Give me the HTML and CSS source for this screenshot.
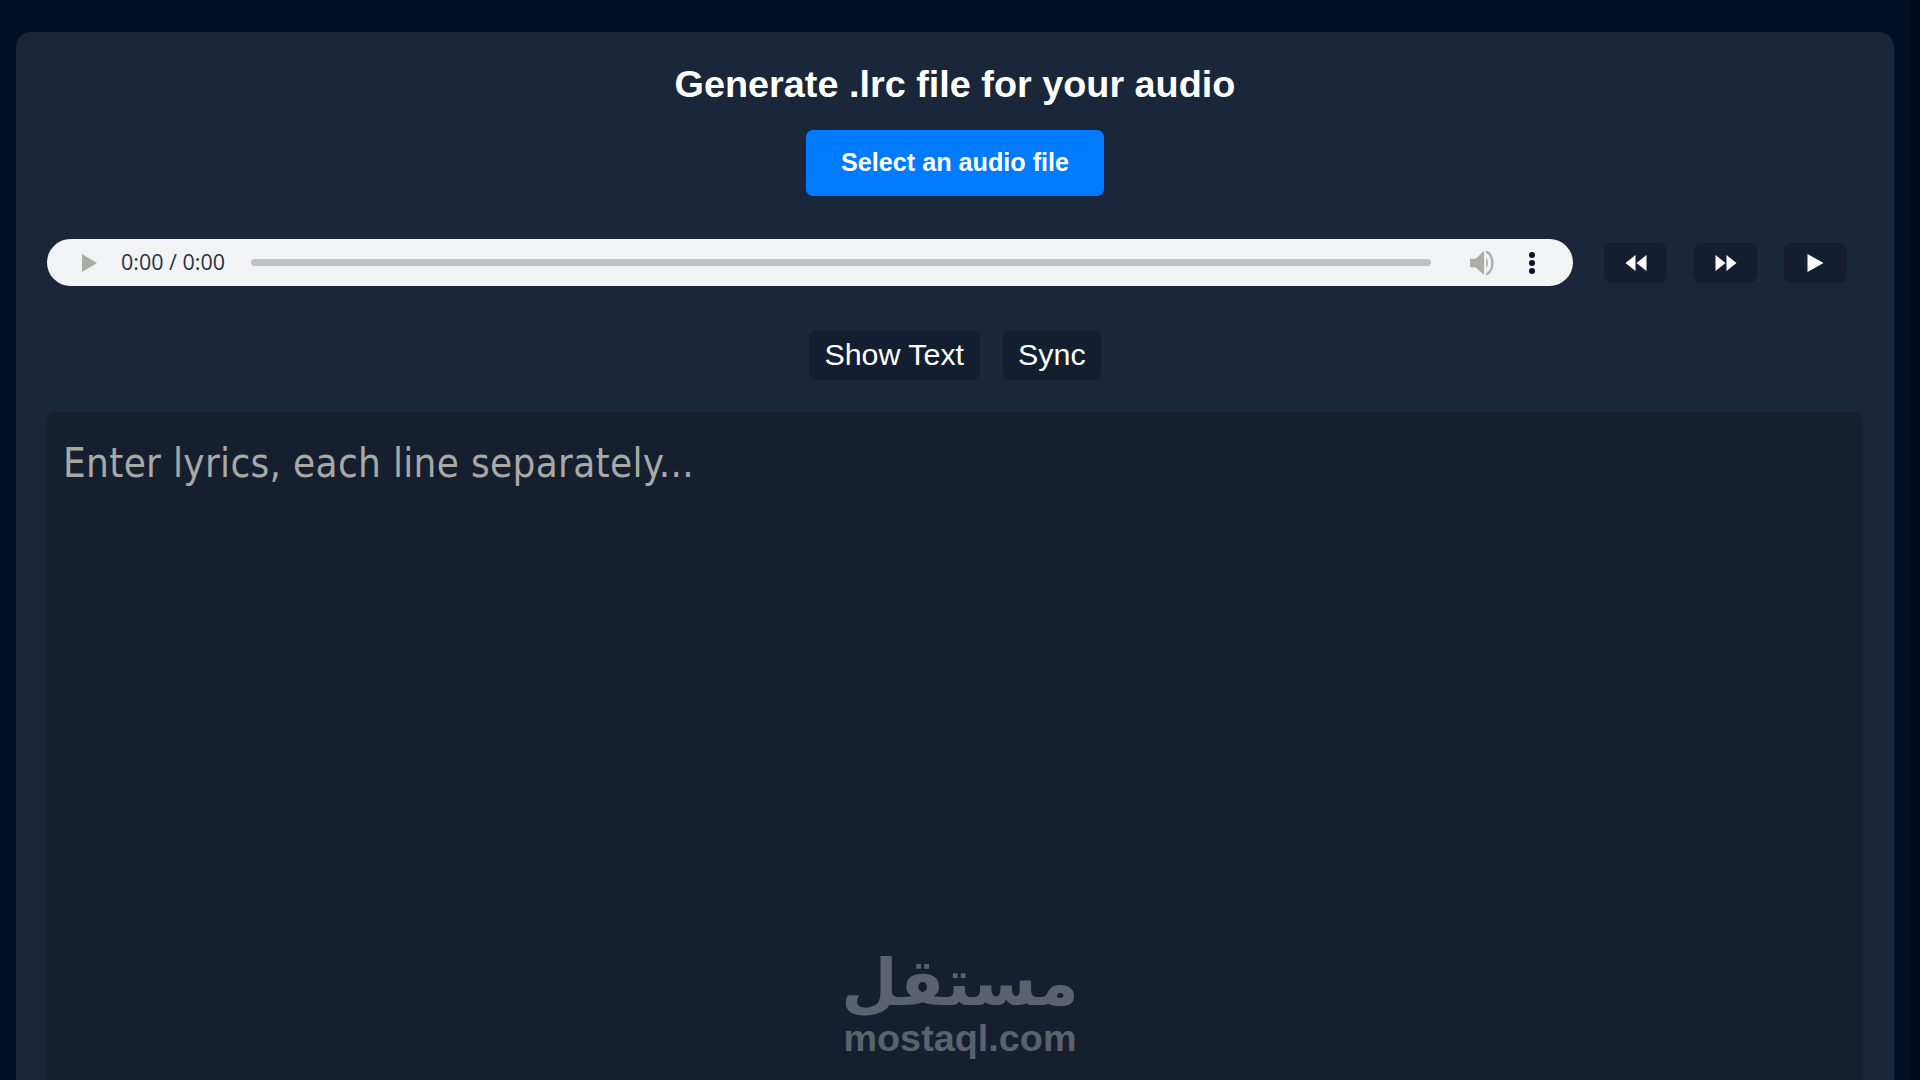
FILE: index.html
```html
<!DOCTYPE html>
<html lang="en">
<head>
  <meta charset="UTF-8" />
  <meta name="viewport" content="width=device-width, initial-scale=1.0"/>
  <title>Generate .lrc file</title>
  <link rel="stylesheet" href="styles.css">
</head>
<body>
  <div class="page">
    <div class="container">
      <h1>Generate .lrc file for your audio</h1>
      <button class="select-btn">Select an audio file</button>

      <!-- Player row -->
      <div class="player-row">
        <div class="player">
          <svg class="player-play" viewBox="0 0 15 18"><path d="M0 0 L15 9 L0 18 Z"/></svg>
          <span class="player-time">0:00 / 0:00</span>
          <div class="player-track"></div>
          <svg class="player-volume" viewBox="0 0 24 24"><path d="M0 8 H5 L13 1 V23 L5 16 H0 Z"/><path d="M15 7 C17 9 17 15 15 17 Z"/><path d="M15 0.5 C24 3 24 21 15 23.5 V21 C21 19 21 5 15 3 Z"/></svg>
          <div class="player-menu"><i></i><i></i><i></i></div>
        </div>
        <div class="skip-btns">
          <button class="icon-btn"><svg viewBox="0 0 21 16"><path d="M10 0 V16 L0 8 Z M21 0 V16 L11 8 Z"/></svg></button>
          <button class="icon-btn"><svg viewBox="0 0 21 16"><path d="M0 0 V16 L10 8 Z M11 0 V16 L21 8 Z"/></svg></button>
          <button class="icon-btn"><svg class="play-icon" viewBox="0 0 16 18"><path d="M0 0 L16 9 L0 18 Z"/></svg></button>
        </div>
      </div>

      <div class="mode-btns">
        <button class="mode-btn">Show Text</button>
        <button class="mode-btn">Sync</button>
      </div>

      <textarea class="lyrics" placeholder="Enter lyrics, each line separately..."></textarea>
    </div>
    <div class="scrollbar"></div>
  </div>

  <!-- Watermark -->
  <div class="watermark">
    <span class="watermark-ar" lang="ar" dir="rtl">مستقل</span>
    <span class="watermark-en">mostaql.com</span>
  </div>
</body>
</html>
```

FILE: styles.css
```css
* { box-sizing: border-box; }
html, body {
  height: 100%;
  overflow: hidden;
}
body {
  margin: 0;
  background: #001024;
  font-family: 'Liberation Sans', Arial, sans-serif;
  color: white;
}
button {
  font-family: inherit;
  color: white;
  border: none;
  cursor: pointer;
}
.page {
  display: flex;
  height: 100%;
  padding: 32px 0 0 16px;
}
.container {
  width: 1878px;
  margin-right: 16px;
  height: 1200px;
  flex: none;
  background: #1a2639;
  border-radius: 15px;
  padding: 0 31px;
  display: flex;
  flex-direction: column;
  align-items: center;
}
.scrollbar {
  width: 10px;
  flex: none;
  margin-top: -32px;
  background: #000c1c;
}
h1 {
  margin: 30px 0 0;
  font-size: 37.8px;
  line-height: 44px;
  font-weight: bold;
  text-align: center;
}
.select-btn {
  width: 298px;
  height: 66px;
  margin-top: 24px;
  padding: 0 0 2px;
  background: #007bff;
  border-radius: 7px;
  font-size: 25.2px;
  font-weight: bold;
}
.player-row {
  align-self: stretch;
  display: flex;
  align-items: center;
  margin-top: 43px;
}
.player {
  width: 1526px;
  height: 47px;
  flex: none;
  display: flex;
  align-items: center;
  background: #f2f3f5;
  border-radius: 24px;
  padding: 0 38px 0 35px;
}
.player-play {
  width: 15px;
  height: 18px;
  fill: #a9aaa6;
  flex: none;
}
.player-time {
  margin: 0 0 2px 24px;
  font-family: 'Open Sans', sans-serif;
  font-size: 21.5px;
  color: #2a3242;
  white-space: nowrap;
}
.player-track {
  flex: 1;
  height: 7px;
  margin: 0 39px 0 26px;
  background: #c0c0c0;
  border-radius: 4px;
}
.player-volume {
  width: 26px;
  height: 26px;
  fill: #acaca8;
  flex: none;
}
.player-menu {
  display: flex;
  flex-direction: column;
  gap: 2px;
  margin-left: 33px;
}
.player-menu i {
  width: 6px;
  height: 6px;
  border-radius: 50%;
  background: #0c1422;
}
.skip-btns {
  display: flex;
  gap: 27px;
  margin-left: 31px;
}
.icon-btn {
  width: 63px;
  height: 40px;
  background: #131f30;
  border-radius: 8px;
  display: flex;
  align-items: center;
  justify-content: center;
  padding: 0;
}
.icon-btn svg {
  width: 22px;
  height: 16px;
  fill: white;
}
.icon-btn .play-icon {
  width: 17px;
  height: 18px;
}
.mode-btns {
  display: flex;
  gap: 23px;
  margin-top: 44px;
}
.mode-btn {
  height: 50px;
  padding: 0 15.5px 2px;
  background: #131f30;
  border-radius: 8px;
  font-size: 30.4px;
}
.lyrics {
  align-self: stretch;
  flex: 1;
  margin-top: 32px;
  margin-bottom: 32px;
  padding: 29px 16px;
  background: #151f2f;
  border: none;
  border-radius: 8px;
  resize: none;
  font-family: 'DejaVu Sans', sans-serif;
  font-stretch: condensed;
  font-size: 40px;
  letter-spacing: 0.33px;
  line-height: 44px;
  color: white;
  outline: none;
}
.lyrics::placeholder {
  color: #a8a8a4;
  opacity: 1;
}
.watermark {
  position: absolute;
  left: 840px;
  top: 946px;
  width: 240px;
  display: flex;
  flex-direction: column;
  align-items: center;
  color: #5b626e;
  font-weight: bold;
}
.watermark-ar {
  font-family: 'DejaVu Sans', sans-serif;
  font-size: 65px;
  line-height: 74px;
}
.watermark-en {
  font-size: 37.8px;
  line-height: 36px;
}
```
